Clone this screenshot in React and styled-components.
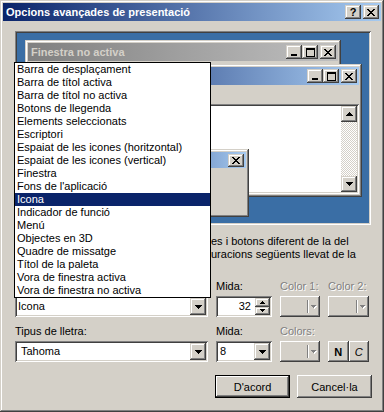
import React from 'react';
import styled, { createGlobalStyle, css } from 'styled-components';

const FACE = '#d4d0c8';

const GlobalStyle = createGlobalStyle`
  html, body { margin: 0; padding: 0; background: ${FACE}; }
  body {
    font-family: Tahoma, "Liberation Sans", Arial, sans-serif;
    font-size: 11px;
    color: #000;
  }
  * { box-sizing: border-box; }
`;

const raised = css`
  box-shadow: inset -1px -1px #404040, inset 1px 1px #fff, inset -2px -2px #808080, inset 2px 2px ${FACE};
`;
const capRaised = css`
  box-shadow: inset -1px -1px #404040, inset 1px 1px ${FACE}, inset -2px -2px #808080, inset 2px 2px #fff;
`;
const sunken = css`
  box-shadow: inset 1px 1px #808080, inset -1px -1px #fff, inset 2px 2px #404040, inset -2px -2px ${FACE};
`;

const PixSvg = styled.svg`
  display: block;
  flex: none;
`;

const PixelIcon = ({ rows, color = '#000', emboss = false }) => {
  const w = rows[0].length + (emboss ? 1 : 0);
  const h = rows.length + (emboss ? 1 : 0);
  const cells = [];
  rows.forEach((r, y) => [...r].forEach((c, x) => { if (c === '#') cells.push([x, y]); }));
  return (
    <PixSvg width={w} height={h} viewBox={`0 0 ${w} ${h}`} shapeRendering="crispEdges">
      {emboss && cells.map(([x, y]) => (
        <rect key={`s${x}_${y}`} x={x + 1} y={y + 1} width="1" height="1" fill="#fff" />
      ))}
      {cells.map(([x, y]) => (
        <rect key={`${x}_${y}`} x={x} y={y} width="1" height="1" fill={color} />
      ))}
    </PixSvg>
  );
};

const CLOSE = ['##....##', '.##..##.', '..####..', '...##...', '..####..', '.##..##.', '##....##'];
const MIN = ['......', '......', '......', '......', '......', '######', '######'];
const MAX = ['#########', '#########', '#.......#', '#.......#', '#.......#', '#.......#', '#.......#', '#.......#', '#########'];
const DOWN = ['#######', '.#####.', '..###..', '...#...'];
const UP = ['...#...', '..###..', '.#####.', '#######'];
const SDOWN = ['#####', '.###.', '..#..'];
const SUP = ['..#..', '.###.', '#####'];

/* ---------- dialog frame ---------- */
const Dialog = styled.div`
  position: relative;
  width: 384px;
  height: 412px;
  background: ${FACE};
  ${capRaised};
  padding: 3px;
  display: flex;
  flex-direction: column;
  overflow: hidden;
`;

const TitleBar = styled.div`
  height: ${p => p.$h || 18}px;
  flex: none;
  display: flex;
  align-items: center;
  padding: 0 2px 0 2px;
  background: ${p => (p.$inactive
    ? 'linear-gradient(to right, #808080, #c0c0c0)'
    : 'linear-gradient(to right, #0a246a, #a6caf0)')};
  color: ${p => (p.$inactive ? FACE : '#fff')};
  font-weight: bold;
  font-size: 11px;
  white-space: nowrap;
  overflow: hidden;
`;

const TitleText = styled.span`
  flex: none;
  padding-left: ${p => p.$pad || 0}px;
`;

const CapBtns = styled.div`
  margin-left: auto;
  display: flex;
  align-items: center;
  flex: none;
`;

const CapBtn = styled.div`
  width: 16px;
  height: ${p => p.$h || 14}px;
  background: ${FACE};
  ${capRaised};
  display: flex;
  align-items: center;
  justify-content: center;
  margin-left: ${p => p.$gap || 0}px;
  color: #000;
  font-weight: bold;
  font-size: 11px;
  line-height: 1;
  padding-top: ${p => p.$pt || 0}px;
`;

const Body = styled.div`
  flex: 1;
  display: flex;
  flex-direction: column;
  padding: 0 10px 0 12px;
`;

/* ---------- preview ---------- */
const Preview = styled.div`
  position: relative;
  flex: none;
  height: 194px;
  margin-top: 10px;
  background: #3a6ea5;
  ${sunken};
  overflow: hidden;
`;

const Win = styled.div`
  position: absolute;
  left: ${p => p.$x}px;
  top: ${p => p.$y}px;
  width: ${p => p.$w}px;
  height: ${p => p.$h}px;
  background: ${FACE};
  ${capRaised};
  padding: 3px;
  display: flex;
  flex-direction: column;
`;

const MenuBar = styled.div`
  height: 19px;
  flex: none;
`;

const Client = styled.div`
  flex: 1;
  background: #fff;
  ${sunken};
  padding: 2px;
  display: flex;
`;

const ClientArea = styled.div`
  flex: 1;
`;

const ScrollBar = styled.div`
  width: 16px;
  display: flex;
  flex-direction: column;
  background: repeating-conic-gradient(${FACE} 0% 25%, #fff 0% 50%) 0 0 / 2px 2px;
`;

const ScrollBtn = styled.div`
  height: 16px;
  flex: none;
  background: ${FACE};
  ${capRaised};
  display: flex;
  align-items: center;
  justify-content: center;
  margin-top: ${p => (p.$bottom ? 'auto' : '0')};
`;

const MsgBody = styled.div`
  flex: 1;
`;

/* ---------- description ---------- */
const Desc = styled.div`
  margin-top: 10px;
  display: flex;
  flex-direction: column;
`;

const DescLine = styled.div`
  height: 13px;
  line-height: 13px;
  white-space: nowrap;
  padding-left: 1px;
`;

/* the start of each line lies under the open list */
const Covered = styled.span`
  display: inline-block;
  width: 195px;
  height: 13px;
  vertical-align: top;
`;

/* ---------- controls ---------- */
const Controls = styled.div`
  margin-top: 19px;
  display: grid;
  grid-template-columns: 193px 56px 40px 41px;
  grid-template-rows: 16px 21px 24px 21px;
  column-gap: 8px;
`;

const Label = styled.div`
  align-self: end;
  height: 13px;
  line-height: 13px;
  margin-bottom: 3px;
  white-space: nowrap;
  color: ${p => (p.$disabled ? '#808080' : '#000')};
  text-shadow: ${p => (p.$disabled ? '1px 1px #fff' : 'none')};
`;

const Combo = styled.div`
  height: 21px;
  background: #fff;
  ${sunken};
  padding: 2px;
  display: flex;
`;

const ComboText = styled.div`
  flex: 1;
  line-height: 17px;
  padding-left: ${p => p.$pl || 0}px;
  padding-right: ${p => p.$pr || 0}px;
  text-align: ${p => p.$align || 'left'};
  white-space: nowrap;
  overflow: hidden;
`;

const ArrowBtn = styled.div`
  width: 16px;
  flex: none;
  background: ${FACE};
  ${capRaised};
  display: flex;
  align-items: center;
  justify-content: center;
`;

const SpinCol = styled.div`
  width: 15px;
  flex: none;
  display: flex;
  flex-direction: column;
`;

const SpinBtn = styled.div`
  flex: 1;
  background: ${FACE};
  ${capRaised};
  display: flex;
  align-items: center;
  justify-content: center;
`;

const ColorBtn = styled.div`
  height: 21px;
  background: ${FACE};
  ${raised};
  display: flex;
  align-items: center;
  justify-content: flex-end;
  padding-right: 3px;
`;

const Sep = styled.div`
  width: 2px;
  height: 13px;
  border-left: 1px solid #808080;
  border-right: 1px solid #fff;
  margin-right: 2px;
`;

const StyleBtns = styled.div`
  display: flex;
  height: 21px;
`;

const StyleBtn = styled.div`
  flex: 1;
  background: ${FACE};
  ${raised};
  display: flex;
  align-items: center;
  justify-content: center;
  font-weight: ${p => (p.$bold ? 'bold' : 'normal')};
  font-style: ${p => (p.$italic ? 'italic' : 'normal')};
`;

const ButtonRow = styled.div`
  display: flex;
  justify-content: flex-end;
  gap: 7px;
  margin-top: 13px;
  margin-right: -1px;
`;

const PushBtn = styled.div`
  width: 75px;
  height: 23px;
  background: ${FACE};
  ${raised};
  border: ${p => (p.$default ? '1px solid #000' : 'none')};
  display: flex;
  align-items: center;
  justify-content: center;
`;

/* ---------- open dropdown ---------- */
const List = styled.div`
  position: absolute;
  left: 14px;
  top: 62px;
  width: 197px;
  background: #fff;
  border: 1px solid #000;
  z-index: 10;
`;

const Item = styled.div`
  height: 13px;
  line-height: 13px;
  padding-left: 2px;
  white-space: nowrap;
  background: ${p => (p.$sel ? '#0a246a' : 'transparent')};
  color: ${p => (p.$sel ? '#fff' : '#000')};
`;

const ITEMS = [
  'Barra de desplaçament',
  'Barra de títol activa',
  'Barra de títol no activa',
  'Botons de llegenda',
  'Elements seleccionats',
  'Escriptori',
  'Espaiat de les icones (horitzontal)',
  'Espaiat de les icones (vertical)',
  'Finestra',
  "Fons de l'aplicació",
  'Icona',
  'Indicador de funció',
  'Menú',
  'Objectes en 3D',
  'Quadre de missatge',
  'Títol de la paleta',
  'Vora de finestra activa',
  'Vora de finestra no activa',
];

export default function App() {
  return (
    <>
      <GlobalStyle />
      <Dialog>
        <TitleBar>
          <TitleText $pad={1}>Opcions avançades de presentació</TitleText>
          <CapBtns>
            <CapBtn $pt={1}>?</CapBtn>
            <CapBtn $gap={2}><PixelIcon rows={CLOSE} /></CapBtn>
          </CapBtns>
        </TitleBar>

        <Body>
          <Preview>
            <Win $x={10} $y={9} $w={316} $h={150}>
              <TitleBar $inactive>
                <TitleText $pad={1}>Finestra no activa</TitleText>
                <CapBtns>
                  <CapBtn><PixelIcon rows={MIN} /></CapBtn>
                  <CapBtn><PixelIcon rows={MAX} /></CapBtn>
                  <CapBtn $gap={2}><PixelIcon rows={CLOSE} /></CapBtn>
                </CapBtns>
              </TitleBar>
            </Win>

            <Win $x={18} $y={33} $w={329} $h={133}>
              <TitleBar>
                <CapBtns>
                  <CapBtn><PixelIcon rows={MIN} /></CapBtn>
                  <CapBtn><PixelIcon rows={MAX} /></CapBtn>
                  <CapBtn $gap={2}><PixelIcon rows={CLOSE} /></CapBtn>
                </CapBtns>
              </TitleBar>
              <MenuBar />
              <Client>
                <ClientArea />
                <ScrollBar>
                  <ScrollBtn><PixelIcon rows={UP} /></ScrollBtn>
                  <ScrollBtn $bottom><PixelIcon rows={DOWN} /></ScrollBtn>
                </ScrollBar>
              </Client>
            </Win>

            <Win $x={60} $y={118} $w={174} $h={68}>
              <TitleBar $h={16}>
                <CapBtns>
                  <CapBtn $h={13}><PixelIcon rows={CLOSE} /></CapBtn>
                </CapBtns>
              </TitleBar>
              <MsgBody />
            </Win>
          </Preview>

          <Desc>
            <DescLine>
              <Covered />es i botons diferent de la del
            </DescLine>
            <DescLine>
              <Covered />uracions següents llevat de la
            </DescLine>
          </Desc>

          <Controls>
            <div />
            <Label>Mida:</Label>
            <Label $disabled>Color 1:</Label>
            <Label $disabled>Color 2:</Label>

            <Combo>
              <ComboText $pl={1}>Icona</ComboText>
              <ArrowBtn><PixelIcon rows={DOWN} /></ArrowBtn>
            </Combo>
            <Combo>
              <ComboText $align="right" $pr={4}>32</ComboText>
              <SpinCol>
                <SpinBtn><PixelIcon rows={SUP} /></SpinBtn>
                <SpinBtn><PixelIcon rows={SDOWN} /></SpinBtn>
              </SpinCol>
            </Combo>
            <ColorBtn>
              <Sep />
              <PixelIcon rows={SDOWN} color="#808080" emboss />
            </ColorBtn>
            <ColorBtn>
              <Sep />
              <PixelIcon rows={SDOWN} color="#808080" emboss />
            </ColorBtn>

            <Label>Tipus de lletra:</Label>
            <Label>Mida:</Label>
            <Label $disabled>Colors:</Label>
            <div />

            <Combo>
              <ComboText $pl={4}>Tahoma</ComboText>
              <ArrowBtn><PixelIcon rows={DOWN} /></ArrowBtn>
            </Combo>
            <Combo>
              <ComboText $pl={2}>8</ComboText>
              <ArrowBtn><PixelIcon rows={DOWN} /></ArrowBtn>
            </Combo>
            <ColorBtn>
              <Sep />
              <PixelIcon rows={SDOWN} color="#808080" emboss />
            </ColorBtn>
            <StyleBtns>
              <StyleBtn $bold>N</StyleBtn>
              <StyleBtn $italic>C</StyleBtn>
            </StyleBtns>
          </Controls>

          <ButtonRow>
            <PushBtn $default>D'acord</PushBtn>
            <PushBtn>Cancel·la</PushBtn>
          </ButtonRow>
        </Body>

        <List>
          {ITEMS.map(t => (
            <Item key={t} $sel={t === 'Icona'}>{t}</Item>
          ))}
        </List>
      </Dialog>
    </>
  );
}
